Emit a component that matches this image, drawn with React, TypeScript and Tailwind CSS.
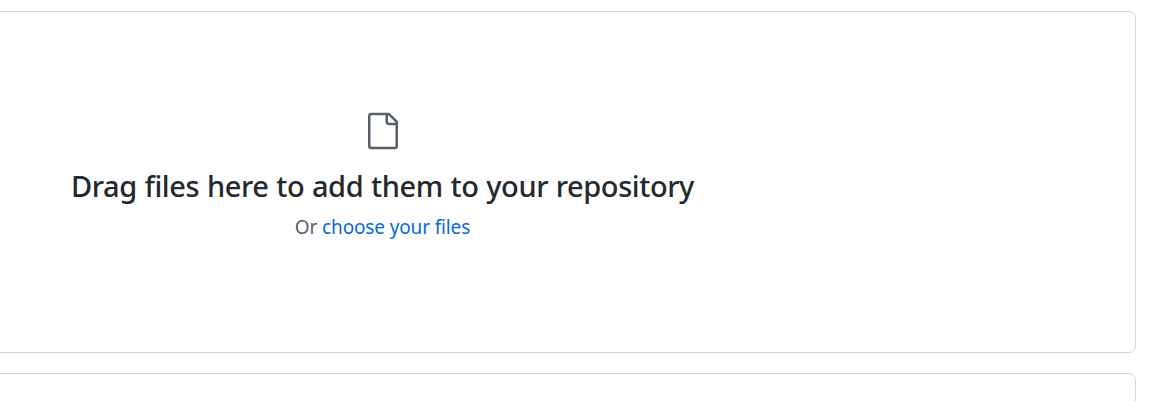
function FileIcon() {
  return (
    <svg viewBox="0 0 24 24" className="ml-px block h-10 w-10 fill-[#57606a]" aria-hidden="true">
      <path d="M5 2.5a.5.5 0 0 0-.5.5v18a.5.5 0 0 0 .5.5h14a.5.5 0 0 0 .5-.5V8.5h-4a2 2 0 0 1-2-2v-4H5Zm10 0v4a.5.5 0 0 0 .5.5h4a.5.5 0 0 0-.146-.336l-4.018-4.018A.5.5 0 0 0 15 2.5ZM3 3a2 2 0 0 1 2-2h9.982a2 2 0 0 1 1.414.586l4.018 4.018A2 2 0 0 1 21 7.018V21a2 2 0 0 1-2 2H5a2 2 0 0 1-2-2V3Z" fillRule="evenodd" />
    </svg>
  );
}

export default function App() {
  return (
    <main className="h-[401px] w-full overflow-hidden bg-white pt-[11px] font-['Noto_Sans','Open_Sans',sans-serif]">
      <section className="-ml-[371px] mr-[23px] flex h-[342px] flex-col items-center rounded-[7px] border border-[#d0d7de] pt-[99px]">
        <div className="flex flex-col items-center whitespace-nowrap">
          <FileIcon />
          <h2 className="mt-[15px] text-[29px] leading-10 font-medium tracking-[-0.41px] [word-spacing:0.6px] text-[#24292f]">
            Drag files here to add them to your repository
          </h2>
          <p className="mt-[7px] text-[19px] leading-7 font-[380] tracking-[-0.14px] text-[#57606a]">
            Or <a href="#" className="text-[#0969da]">choose your files</a>
          </p>
        </div>
      </section>
      <section className="-ml-[371px] mr-[23px] mt-5 h-[200px] rounded-[7px] border border-[#d0d7de]" />
    </main>
  );
}
